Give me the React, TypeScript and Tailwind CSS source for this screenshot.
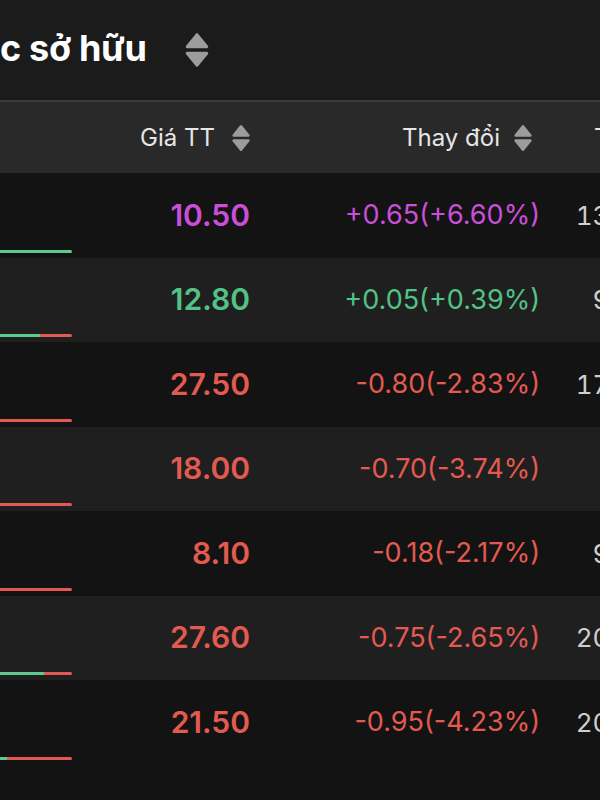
import { Fragment } from 'react';

type Row = {
  price: string;
  change: string;
  volume: string;
  tone: 'ceil' | 'up' | 'down';
  greenPct: number;
};

const rows: Row[] = [
  { price: '10.50', change: '+0.65(+6.60%)', volume: '13,250', tone: 'ceil', greenPct: 100 },
  { price: '12.80', change: '+0.05(+0.39%)', volume: '9,120', tone: 'up', greenPct: 55 },
  { price: '27.50', change: '-0.80(-2.83%)', volume: '17,600', tone: 'down', greenPct: 0 },
  { price: '18.00', change: '-0.70(-3.74%)', volume: '800', tone: 'down', greenPct: 0 },
  { price: '8.10', change: '-0.18(-2.17%)', volume: '9,310', tone: 'down', greenPct: 0 },
  { price: '27.60', change: '-0.75(-2.65%)', volume: '20,450', tone: 'down', greenPct: 61 },
  { price: '21.50', change: '-0.95(-4.23%)', volume: '20,780', tone: 'down', greenPct: 10 },
];

const toneClass = {
  ceil: 'text-[#c94fd8]',
  up: 'text-[#52c285]',
  down: 'text-[#e25a50]',
};

function SortIcon({ size = 'sm' }: { size?: 'sm' | 'lg' }) {
  const cls = size === 'lg' ? 'w-[26px] h-[40px]' : 'w-[20px] h-[28px]';
  return (
    <svg viewBox="0 0 20 28" className={`${cls} shrink-0`} fill="#9c9c9c">
      <path d="M9 1.6a1.3 1.3 0 0 1 2 0l7.4 9.2c.6.8.1 1.9-.9 1.9H2.5c-1 0-1.5-1.1-.9-1.9z" />
      <path d="M9 26.4a1.3 1.3 0 0 0 2 0l7.4-9.2c.6-.8.1-1.9-.9-1.9H2.5c-1 0-1.5 1.1-.9 1.9z" />
    </svg>
  );
}

export default function App() {
  return (
    <div
      className="w-[600px] h-[800px] overflow-hidden bg-[#131313] text-white"
      style={{ fontFamily: 'Inter, "Noto Sans", sans-serif' }}
    >
      {/* tiêu đề */}
      <div className="h-[100px] bg-[#1b1b1b] flex items-center gap-[37px]">
        <h1 className="text-[36px] font-bold leading-none tracking-[-0.3px] whitespace-nowrap -mt-[4px]">c sở hữu</h1>
        <SortIcon size="lg" />
      </div>
      <div className="h-[2px] bg-[#3b3b3b]" />

      {/* header bảng */}
      <div className="h-[71px] bg-[#292929] flex items-center whitespace-nowrap">
        <div className="w-[73px] shrink-0" />
        <div className="w-[179px] shrink-0 flex justify-end items-center gap-[16px] pr-[1px]">
          <span className="text-[24px] text-[#e6e6e6]">Giá TT</span>
          <SortIcon />
        </div>
        <div className="w-[289px] shrink-0 flex justify-end items-center gap-[13px] pr-[8px]">
          <span className="text-[24px] text-[#e6e6e6]">Thay đổi</span>
          <SortIcon />
        </div>
        <div className="w-[140px] shrink-0 pl-[53px]">
          <span className="text-[24px] text-[#e6e6e6]">Tổng KL</span>
        </div>
      </div>

      {rows.map((r, i) => (
        <Fragment key={i}>
          <div
            className={`h-[84.5px] flex items-center whitespace-nowrap ${
              i % 2 === 1 ? 'bg-[#1f1f1f]' : 'bg-[#131313]'
            }`}
          >
            <div className="w-[73px] shrink-0 self-end pb-[5px] pr-[1px]">
              <div className="h-[3px] flex rounded-r-full overflow-hidden">
                <div className="bg-[#5fca8d]" style={{ width: `${r.greenPct}%` }} />
                <div className="flex-1 bg-[#e05a52]" />
              </div>
            </div>
            <div className={`w-[179px] shrink-0 text-right text-[30px] font-semibold pr-[2px] ${toneClass[r.tone]}`}>
              {r.price}
            </div>
            <div className={`w-[289px] shrink-0 text-right text-[27px] pr-[1px] ${toneClass[r.tone]}`}>
              {r.change}
            </div>
            <div className="w-[126px] shrink-0 text-right text-[26px] tabular-nums text-[#cfcfcf]">{r.volume}</div>
          </div>
        </Fragment>
      ))}
    </div>
  );
}
